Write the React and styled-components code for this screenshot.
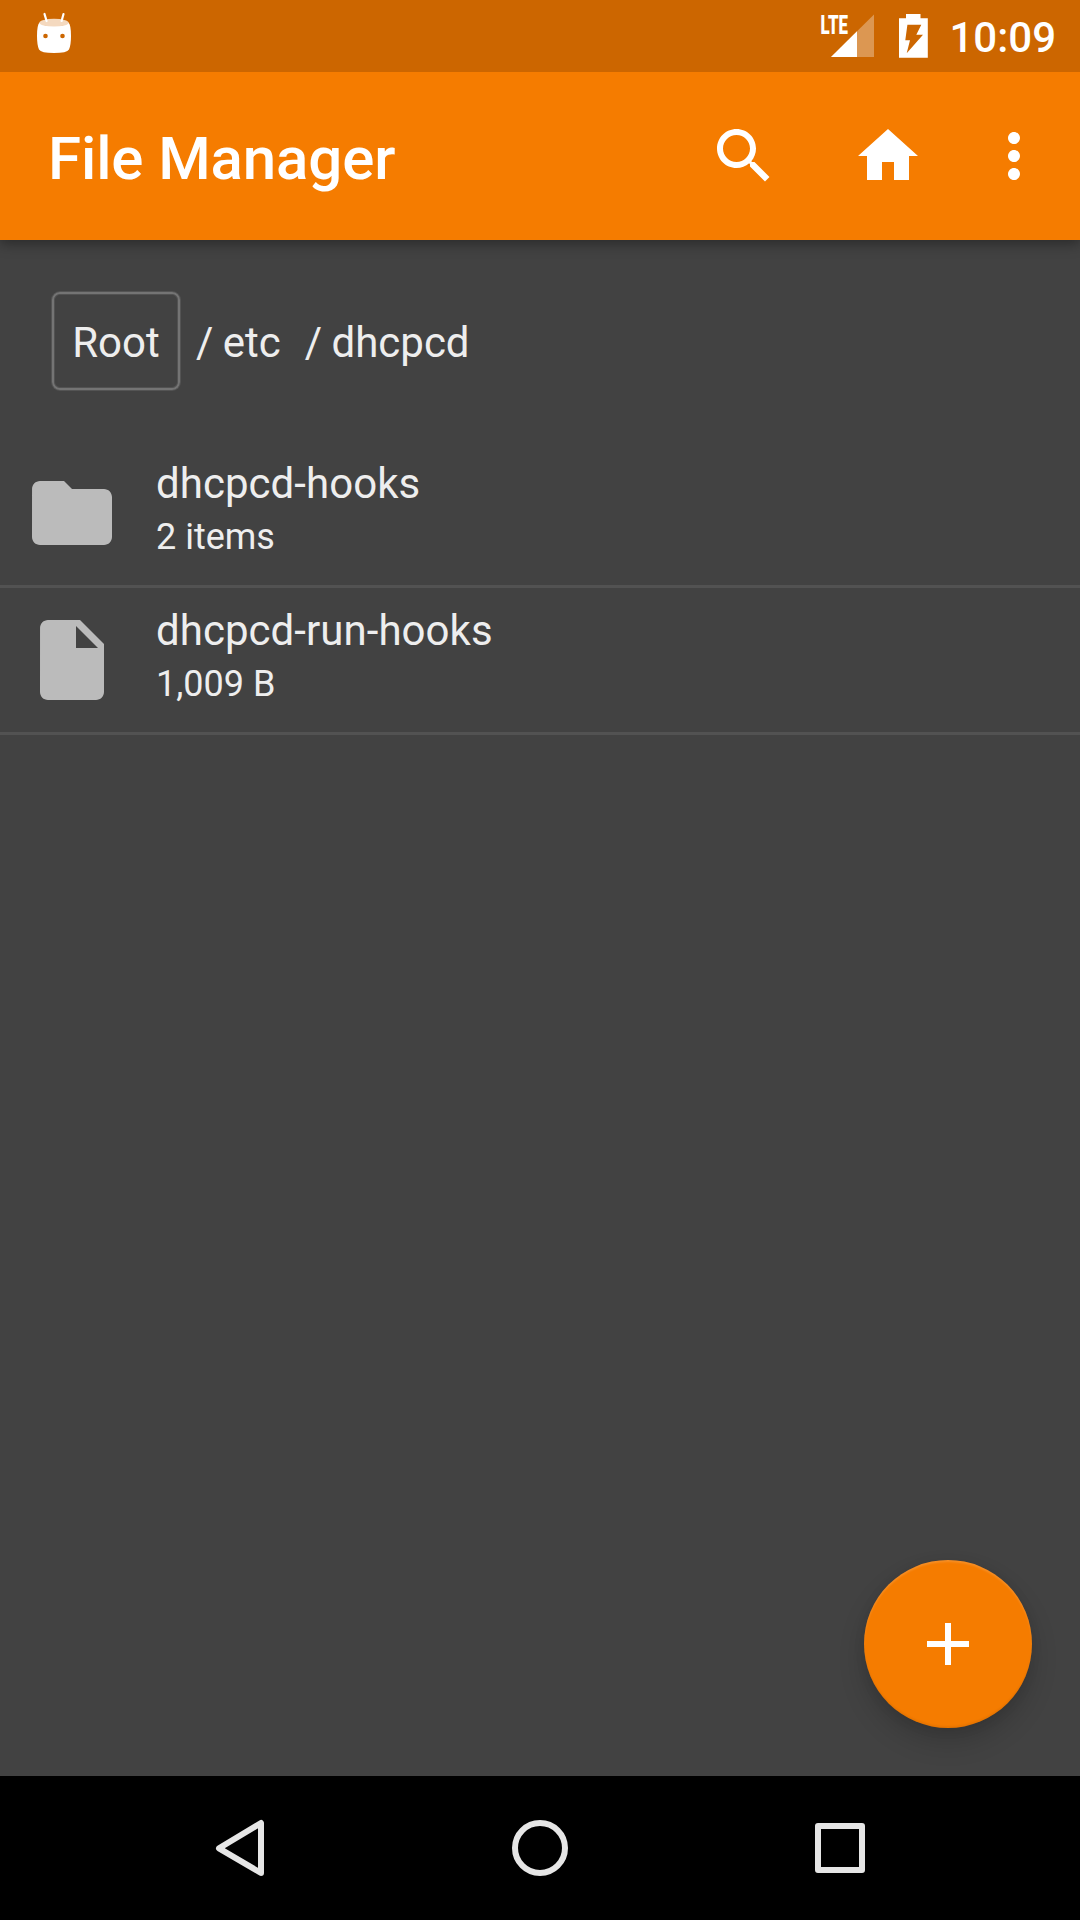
import React from "react";
import styled, { createGlobalStyle } from "styled-components";

const GlobalStyle = createGlobalStyle`
  * { box-sizing: border-box; }
  body { margin: 0; background: #424242; }
`;

const Screen = styled.div`
  width: 1080px;
  height: 1920px;
  display: flex;
  flex-direction: column;
  overflow: hidden;
  background: #424242;
  color: #eeeeee;
  font-family: Roboto, "Liberation Sans", sans-serif;
`;

const StatusBar = styled.header`
  position: relative;
  z-index: 1;
  height: 72px;
  flex: none;
  display: flex;
  align-items: center;
  padding: 0 24px 0 30px;
  background: #cc6600;
`;

const StatusIcon = styled.svg`
  display: block;
  flex: none;
  margin-left: ${(p) => p.$push || "0"};
`;

const Clock = styled.time`
  margin-left: 17px;
  font-size: 42px;
  font-weight: 500;
  line-height: 72px;
  color: #fff;
  padding-top: 4px;
`;

const AppBar = styled.div`
  height: 168px;
  flex: none;
  display: flex;
  align-items: center;
  padding: 0 30px 0 48px;
  background: #f57c00;
  box-shadow: 0 4px 12px rgba(0, 0, 0, 0.36);
`;

const Title = styled.h1`
  margin: 0 auto 0 0;
  padding-top: 5px;
  font-size: 60px;
  font-weight: 500;
  line-height: 72px;
  letter-spacing: -0.1px;
  color: #fff;
`;

const IconButton = styled.button`
  display: block;
  width: 72px;
  height: 72px;
  margin-left: ${(p) => p.$gap || 0}px;
  padding: 0;
  border: 0;
  background: none;
`;

const Icon = styled.svg`
  display: block;
  flex: none;
  fill: ${(p) => p.$color || "#fff"};
`;

const Main = styled.main`
  flex: 1;
  display: flex;
  flex-direction: column;
`;

const Breadcrumbs = styled.nav`
  height: 201px;
  display: flex;
  align-items: flex-start;
  padding: 52px 0 0 52px;
  font-size: 42px;
  line-height: 102px;
`;

const RootCrumb = styled.span`
  width: 128px;
  height: 98px;
  line-height: 98px;
  text-align: center;
  border: 2px solid #747474;
  border-radius: 8px;
  box-shadow: 0 0 0 1px #545454, inset 0 0 0 1px #525252;
`;

const Crumb = styled.span`
  margin-left: ${(p) => p.$gap}px;
  white-space: pre;
  word-spacing: -1px;
`;

const FileList = styled.ul`
  list-style: none;
  margin: 0;
  padding: 0;
`;

const Row = styled.li`
  height: 147px;
  display: flex;
  align-items: center;
  gap: 36px;
  padding-left: 24px;
  border-bottom: 3px solid #525252;
`;

const RowText = styled.div`
  display: flex;
  flex-direction: column;
  padding-bottom: 5px;
`;

const Name = styled.span`
  font-size: 42px;
  line-height: 54px;
  letter-spacing: 0.05px;
`;

const Detail = styled.span`
  font-size: 36px;
  line-height: 53px;
`;

const Fab = styled.button`
  width: 168px;
  height: 168px;
  margin: auto 48px 48px auto;
  padding: 0;
  display: flex;
  align-items: center;
  justify-content: center;
  border: 0;
  border-radius: 50%;
  background: #f57c00;
  box-shadow: 0 14px 26px rgba(0, 0, 0, 0.17), 0 2px 12px rgba(0, 0, 0, 0.07),
    inset 0 2px 2px rgba(255, 255, 255, 0.14), inset 0 -2px 2px rgba(0, 0, 0, 0.06);
`;

const NavBar = styled.footer`
  height: 144px;
  flex: none;
  display: flex;
  justify-content: center;
  align-items: center;
  background: #000;
`;

const NavButton = styled.button`
  width: 300px;
  height: 144px;
  display: flex;
  align-items: center;
  justify-content: center;
  padding: 0;
  border: 0;
  background: none;
`;

const NavIcon = styled.svg`
  display: block;
  fill: none;
  stroke: #e6e6e6;
  stroke-width: 6;
  stroke-linejoin: round;
`;

const paths = {
  search:
    "M15.5 14h-.79l-.28-.27C15.41 12.59 16 11.11 16 9.5 16 5.91 13.09 3 9.5 3S3 5.91 3 9.5 5.91 16 9.5 16c1.61 0 3.09-.59 4.23-1.57l.27.28v.79l5 4.99L20.49 19l-4.99-5zm-6 0C7.01 14 5 11.99 5 9.5S7.01 5 9.5 5 14 7.01 14 9.5 11.99 14 9.5 14z",
  home: "M10 20v-6h4v6h5v-8h3L12 3 2 12h3v8z",
  more: "M12 8c1.1 0 2-.9 2-2s-.9-2-2-2-2 .9-2 2 .9 2 2 2zm0 2c-1.1 0-2 .9-2 2s.9 2 2 2 2-.9 2-2-.9-2-2-2zm0 6c-1.1 0-2 .9-2 2s.9 2 2 2 2-.9 2-2-.9-2-2-2z",
  folder:
    "M10 4H4c-1.1 0-1.99.9-1.99 2L2 18c0 1.1.9 2 2 2h16c1.1 0 2-.9 2-2V8c0-1.1-.9-2-2-2h-8l-2-2z",
  file: "M6 2c-1.1 0-1.99.9-1.99 2L4 20c0 1.1.89 2 1.99 2H18c1.1 0 2-.9 2-2V8l-6-6H6zm7 7V3.5L18.5 9H13z",
  add: "M19 13h-6v6h-2v-6H5v-2h6V5h2v6h6v2z",
};

function Glyph({ name, size = 72, color }) {
  return (
    <Icon viewBox="0 0 24 24" width={size} height={size} $color={color}>
      <path d={paths[name]} />
    </Icon>
  );
}

function MarshmallowIcon() {
  return (
    <StatusIcon width="48" height="72" viewBox="30 0 48 72">
      <path
        d="M39.5 22.5Q43 26 54 26T68.5 22.5Q71 25 71 36Q71 45 69 49.5Q67 53 54 53Q41 53 39 49.5Q37 45 37 36Q37 25 39.5 22.5Z"
        fill="#fff"
      />
      <ellipse cx="54" cy="22.7" rx="14.6" ry="3.9" fill="#f4d9bf" />
      <path d="M44.5 14L46.6 21M63.5 14L61.6 21" stroke="#fff" strokeWidth="2.2" strokeLinecap="round" />
      <circle cx="45.5" cy="36" r="2.3" fill="#cc6600" />
      <circle cx="62.5" cy="36" r="2.3" fill="#cc6600" />
    </StatusIcon>
  );
}

function SignalIcon() {
  return (
    <StatusIcon $push="auto" width="58" height="72" viewBox="818 0 58 72">
      <path d="M831 57L874 14.5V57Z" fill="#fff" fillOpacity="0.32" />
      <path d="M831 57L857 31.3V57Z" fill="#fff" />
      <text
        x="820.5"
        y="33.5"
        textLength="27.5"
        lengthAdjust="spacingAndGlyphs"
        fontFamily="Roboto, sans-serif"
        fontWeight="900"
        fontSize="26"
        fill="#fff"
      >
        LTE
      </text>
    </StatusIcon>
  );
}

function BatteryIcon() {
  return (
    <StatusIcon $push="20px" width="36" height="72" viewBox="896 0 36 72">
      <path
        fillRule="evenodd"
        fill="#fff"
        d="M906 14H920.5V18.3H927.8V57.8H899V18.3H906ZM907.4 24.7L905.3 40.3H910L906.7 53.3L923 34.8H916.3L921.3 24.7Z"
      />
    </StatusIcon>
  );
}

const files = [
  { icon: "folder", name: "dhcpcd-hooks", detail: "2 items" },
  { icon: "file", name: "dhcpcd-run-hooks", detail: "1,009 B" },
];

export default function App() {
  return (
    <Screen>
      <GlobalStyle />
      <StatusBar>
        <MarshmallowIcon />
        <SignalIcon />
        <BatteryIcon />
        <Clock>10:09</Clock>
      </StatusBar>
      <AppBar>
        <Title>File Manager</Title>
        <IconButton aria-label="Search">
          <Glyph name="search" />
        </IconButton>
        <IconButton aria-label="Home" $gap={72}>
          <Glyph name="home" />
        </IconButton>
        <IconButton aria-label="More options" $gap={54}>
          <Glyph name="more" />
        </IconButton>
      </AppBar>
      <Main>
        <Breadcrumbs>
          <RootCrumb>Root</RootCrumb>
          <Crumb $gap={16}>/ etc</Crumb>
          <Crumb $gap={24}>/ dhcpcd</Crumb>
        </Breadcrumbs>
        <FileList>
          {files.map((f) => (
            <Row key={f.name}>
              <Glyph name={f.icon} size={96} color="#bbbbbb" />
              <RowText>
                <Name>{f.name}</Name>
                <Detail>{f.detail}</Detail>
              </RowText>
            </Row>
          ))}
        </FileList>
        <Fab aria-label="Add">
          <Glyph name="add" />
        </Fab>
      </Main>
      <NavBar>
        <NavButton aria-label="Back">
          <NavIcon width="72" height="72" viewBox="204 1812 72 72">
            <path d="M261 1823V1873L219 1848.3Z" />
          </NavIcon>
        </NavButton>
        <NavButton aria-label="Home screen">
          <NavIcon width="72" height="72" viewBox="504 1812 72 72">
            <circle cx="540" cy="1848" r="25" />
          </NavIcon>
        </NavButton>
        <NavButton aria-label="Recent apps">
          <NavIcon width="72" height="72" viewBox="804 1812 72 72">
            <rect x="818" y="1826" width="44" height="44" />
          </NavIcon>
        </NavButton>
      </NavBar>
    </Screen>
  );
}
